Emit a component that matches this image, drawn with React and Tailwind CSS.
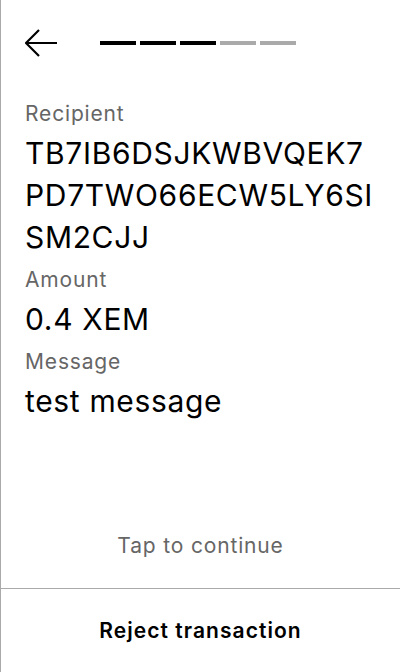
import React from "react";

const Field = ({ label, value }) => {
  return (
    <div className="flex flex-col">
      <span className="pt-[3px] text-[21px] leading-[37px] tracking-[0.04em] text-[#666666]">{label}</span>
      <span className="text-[30px] leading-[42px] tracking-[0.022em] text-black break-all">{value}</span>
    </div>
  );
};

const App = () => {
  const steps = [true, true, true, false, false];
  return (
    <div
      className="w-[400px] h-[672px] bg-white border-l border-[#aaaaaa] flex flex-col"
      style={{ fontFamily: "Inter, 'Liberation Sans', sans-serif" }}
    >
      <div className="flex items-center h-[86px] px-6">
        <svg width="33" height="28" viewBox="0 0 33 28" className="flex-shrink-0">
          <path d="M32 14H2M14 1L1 14l13 13" fill="none" stroke="black" strokeWidth="2.2" />
        </svg>
        <div className="flex gap-1 ml-[42px]">
          {steps.map((done, i) => (
            <div key={i} className={done ? "w-9 h-1 bg-black" : "w-9 h-1 bg-[#aaaaaa]"}></div>
          ))}
        </div>
      </div>
      <div className="flex flex-col px-6 pt-[6px]">
        <Field label="Recipient" value="TB7IB6DSJKWBVQEK7PD7TWO66ECW5LY6SISM2CJJ" />
        <Field label="Amount" value="0.4 XEM" />
        <Field label="Message" value="test message" />
      </div>
      <div className="flex-grow"></div>
      <div className="text-center text-[21px] tracking-[0.04em] text-[#666666] pb-[27px]">Tap to continue</div>
      <div className="border-t border-[#aaaaaa] h-[84px] flex items-center justify-center">
        <span className="text-[21px] tracking-[0.05em] font-semibold text-black">Reject transaction</span>
      </div>
    </div>
  );
};

export default App;
